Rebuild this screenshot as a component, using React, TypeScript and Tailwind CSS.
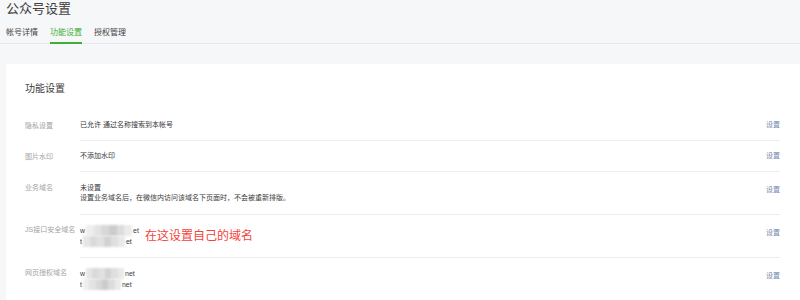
const font = "font-['Liberation_Sans','Noto_Sans_CJK_SC',sans-serif]";

const mosaicA = ["bg-[#eeeeee]", "bg-[#e3e3e3]", "bg-[#d8d8d8]", "bg-[#cccccc]", "bg-[#dcdcdc]", "bg-[#ebebeb]"];
const mosaicB = ["bg-[#e6e6e6]", "bg-[#dadada]", "bg-[#e1e1e1]", "bg-[#d2d2d2]", "bg-[#dfdfdf]", "bg-[#e9e9e9]"];

const Mosaic = ({ cells, width }: { cells: string[]; width: string }) => (
    <span className={`inline-flex h-[11px] ${width} blur-[1px] mx-[1px]`}>
        {cells.map((c, i) => (
            <span key={i} className={`flex-1 ${c}`} />
        ))}
    </span>
);

const Domain = ({ head, tail, cells, width }: { head: string; tail: string; cells: string[]; width: string }) => (
    <div className="flex items-center h-[11px] leading-[11px]">
        <span>{head}</span>
        <Mosaic cells={cells} width={width} />
        <span>{tail}</span>
    </div>
);

type RowProps = {
    label: string;
    pad: string;
    lift?: boolean;
    last?: boolean;
    children: React.ReactNode;
};

const Row = ({ label, pad, lift, last, children }: RowProps) => (
    <div className="flex">
        <div className={`w-[55px] shrink-0 ${pad} text-[7px] leading-[8px] text-[#a3a3a3]`}>
            <div className="mt-[1px]">{label}</div>
        </div>
        <div className={`flex-1 flex justify-between ${pad} ${last ? "" : "border-b border-[#ededf0]"}`}>
            <div className="text-[7px] text-[#3a3a3a]">{children}</div>
            <a className={`self-center text-[7px] leading-[8px] text-[#7687ad] ${lift ? "pb-[7px]" : ""}`}>设置</a>
        </div>
    </div>
);

export default function App() {
    return (
        <div className={`w-[800px] h-[300px] overflow-hidden bg-[#f6f7f9] ${font}`}>
            <div className="px-[6px] pt-[2px]">
                <h1 className="text-[13px] leading-[13px] text-[#3d3d3d]">公众号设置</h1>
            </div>

            <nav className="mt-[14px] border-b border-[#e9e9ec] px-[6px] flex gap-[12px] text-[8px] leading-[8px]">
                <span className="w-[32px] pb-[6px] text-[#444]">帐号详情</span>
                <span className="w-[32px] pb-[5px] -mb-px border-b-2 border-[#3cb035] text-[#3cb035]">功能设置</span>
                <span className="w-[32px] pb-[6px] text-[#444]">授权管理</span>
            </nav>

            <div className="ml-[6px] mt-[20px] bg-white pl-[19px] pr-[20px] pt-[20px] pb-[20px]">
                <h2 className="text-[10px] leading-[10px] text-[#3a3a3a] mb-[16px]">功能设置</h2>

                <Row label="隐私设置" pad="py-[11px]">
                    <div className="leading-[8px]">已允许 通过名称搜索到本帐号</div>
                </Row>

                <Row label="图片水印" pad="py-[11px]">
                    <div className="leading-[8px]">不添加水印</div>
                </Row>

                <Row label="业务域名" pad="py-[11px]" lift>
                    <div className="leading-[10px]">未设置</div>
                    <div className="leading-[10px]">设置业务域名后，在微信内访问该域名下页面时，不会被重新排版。</div>
                </Row>

                <Row label="JS接口安全域名" pad="py-[10px]" lift>
                    <div className="flex items-center gap-[6px]">
                        <div>
                            <Domain head="w" tail="et" cells={mosaicA} width="w-[46px]" />
                            <Domain head="t" tail="et" cells={mosaicB} width="w-[42px]" />
                        </div>
                        <span className="text-[12px] leading-[12px] text-[#f5433b]">在这设置自己的域名</span>
                    </div>
                </Row>

                <Row label="网页授权域名" pad="py-[10px]" lift last>
                    <Domain head="w" tail="net" cells={mosaicB} width="w-[38px]" />
                    <Domain head="t" tail="net" cells={mosaicA} width="w-[38px]" />
                </Row>
            </div>
        </div>
    );
}
